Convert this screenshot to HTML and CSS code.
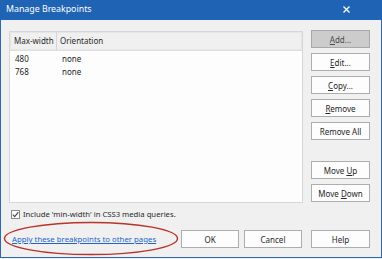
FILE: index.html
```html
<!DOCTYPE html>
<html lang="en">
<head>
    <meta charset="UTF-8">
    <title>Manage Breakpoints</title>
    <link rel="stylesheet" href="styles.css">
</head>
<body>
    <div class="window">
        <div class="titlebar">
            <span class="title">Manage Breakpoints</span>
            <svg class="close" width="7" height="7" viewBox="0 0 7 7">
                <path d="M0.5 0.5 L6.5 6.5 M6.5 0.5 L0.5 6.5" stroke="#fff" stroke-width="1.3"/>
            </svg>
        </div>

        <div class="content">
            <div class="main">
                <div class="list">
                    <div class="list-head">
                        <div class="col col-width">Max-width</div>
                        <div class="col col-orient">Orientation</div>
                    </div>
                    <div class="list-row">
                        <div class="cell col-width">480</div>
                        <div class="cell">none</div>
                    </div>
                    <div class="list-row">
                        <div class="cell col-width">768</div>
                        <div class="cell">none</div>
                    </div>
                </div>

                <div class="side">
                    <button class="btn btn-default"><u>A</u>dd...</button>
                    <button class="btn"><u>E</u>dit...</button>
                    <button class="btn"><u>C</u>opy...</button>
                    <button class="btn"><u>R</u>emove</button>
                    <button class="btn">Remove All</button>
                    <button class="btn btn-gap">Move <u>U</u>p</button>
                    <button class="btn">Move <u>D</u>own</button>
                </div>
            </div>

            <label class="check">
                <span class="box">
                    <svg width="7" height="7" viewBox="0 0 7 7">
                        <path d="M0.8 3.6 L2.7 5.6 L6.3 1.2" fill="none" stroke="#444" stroke-width="1.1"/>
                    </svg>
                </span>
                Include 'min-width' in CSS3 media queries.
            </label>

            <div class="footer">
                <a href="#" class="apply">Apply these breakpoints to other pages</a>
                <div class="footer-btns">
                    <button class="btn">OK</button>
                    <button class="btn">Cancel</button>
                    <button class="btn btn-help">Help</button>
                </div>
            </div>
        </div>

        <!-- red annotation ring round the link -->
        <svg class="ring" width="176" height="35" viewBox="0 0 176 35">
            <ellipse cx="88" cy="17.5" rx="86.5" ry="16" fill="none" stroke="#b8332a" stroke-width="1.4"/>
        </svg>
    </div>
</body>
</html>
```

FILE: styles.css
```css
* {
    margin: 0;
    padding: 0;
    box-sizing: border-box;
    font-family: 'Noto Sans', 'Open Sans', sans-serif;
}

body {
    width: 382px;
    height: 259px;
    background: #f0f0f0;
    overflow: hidden;
}

.window {
    position: relative;
    width: 382px;
    height: 258px;
    background: #f0f0f0;
    border: 1px solid #2a68b8;
    border-top: none;
}

.titlebar {
    height: 20px;
    margin: 0 -1px;
    background: #1f63b4;
    display: flex;
    align-items: center;
    justify-content: space-between;
    padding: 0 32px 2px 6px;
}

.title {
    color: #fff;
    font-size: 8.8px;
}

.close {
    display: block;
}

.content {
    padding: 10px 11px 0 8px;
    font-size: 8px;
    color: #222;
}

.main {
    display: flex;
    gap: 8px;
}

.list {
    width: 294px;
    height: 172px;
    margin-top: 1px;
    background: #fdfdfd;
    border: 1px solid #d6d6d6;
}

.list-head {
    display: flex;
    height: 19px;
    background: #f0f0f0;
    border-bottom: 1px solid #e0e0e0;
    box-shadow: inset 0 0 0 1px #e6e6e6;
}

.col {
    line-height: 18px;
    color: #2a2a2a;
}

.col-width {
    width: 47px;
    padding-left: 4px;
}

.list-head .col-width {
    border-right: 1px solid #d6d6d6;
}

.col-orient {
    padding-left: 3px;
}

.list-row {
    display: flex;
    height: 13px;
    line-height: 13px;
    color: #1e1e1e;
}

.list-head + .list-row {
    margin-top: 1px;
}

.cell {
    padding-left: 5px;
}

.side {
    display: flex;
    flex-direction: column;
    gap: 5px;
    width: 59px;
}

.btn {
    height: 18px;
    background: #fdfdfd;
    border: 1px solid #adadad;
    font-size: 8px;
    color: #262626;
    font-family: 'Noto Sans', 'Open Sans', sans-serif;
    white-space: nowrap;
}

.btn-default {
    background: #cccccc;
    border-color: #a8a8a8;
    color: #4a4a4a;
}

.btn-gap {
    margin-top: 16px;
}

.check {
    display: flex;
    align-items: center;
    gap: 3px;
    margin-top: 4px;
    margin-left: 2px;
    height: 14px;
    font-size: 7.7px;
    color: #2a2a2a;
}

.box {
    width: 9px;
    height: 9px;
    border: 1px solid #8a8a8a;
    background: #fff;
    display: flex;
    align-items: center;
    justify-content: center;
}

.box svg {
    display: block;
}

.footer {
    display: flex;
    align-items: center;
    justify-content: space-between;
    margin-top: 9px;
}

.apply {
    color: #1e64c8;
    margin-left: 3px;
    font-size: 7.8px;
    text-decoration: underline;
}

.footer-btns {
    display: flex;
    gap: 5px;
}

.footer-btns .btn {
    width: 58px;
}

.footer-btns .btn-help {
    width: 59px;
    margin-left: 4px;
}

.ring {
    position: absolute;
    left: 2px;
    top: 221px;
}
```
